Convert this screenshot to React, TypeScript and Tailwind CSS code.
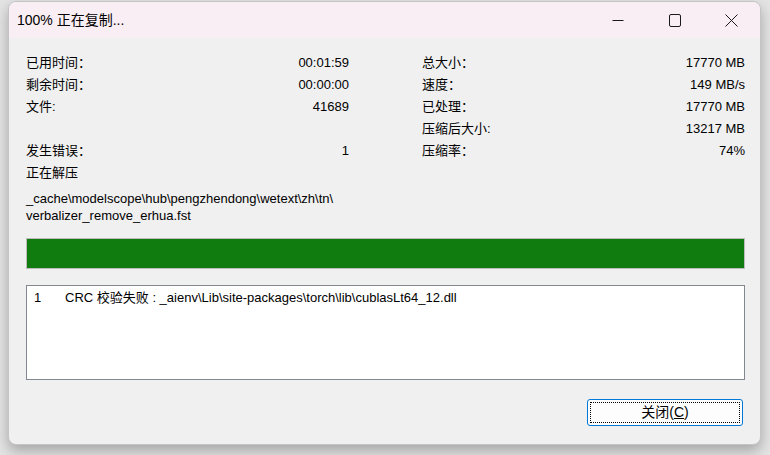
import React from 'react';

const font = { fontFamily: '"Liberation Sans", "Noto Sans CJK SC", sans-serif' };

type Row = { label: string; value?: string };

const leftRows: (Row | null)[] = [
  { label: '已用时间：', value: '00:01:59' },
  { label: '剩余时间：', value: '00:00:00' },
  { label: '文件:', value: '41689' },
  null,
  { label: '发生错误：', value: '1' },
  { label: '正在解压' },
];

const rightRows: (Row | null)[] = [
  { label: '总大小：', value: '17770 MB' },
  { label: '速度：', value: '149 MB/s' },
  { label: '已处理：', value: '17770 MB' },
  { label: '压缩后大小:', value: '13217 MB' },
  { label: '压缩率：', value: '74%' },
];

function StatColumn({ rows }: { rows: (Row | null)[] }) {
  return (
    <div className="flex flex-col">
      {rows.map((r, i) => (
        <div key={i} className="flex h-[22px] items-center justify-between">
          <span>{r?.label}</span>
          <span>{r?.value}</span>
        </div>
      ))}
    </div>
  );
}

function CaptionButtons() {
  return (
    <div className="flex h-full">
      <button className="flex h-full w-[57px] items-center justify-center">
        <svg width="12" height="12" viewBox="0 0 12 12">
          <path d="M0.5 6.5h11" stroke="#1a1a1a" strokeWidth="1" />
        </svg>
      </button>
      <button className="flex h-full w-[57px] items-center justify-center">
        <svg width="12" height="13" viewBox="0 0 12 13">
          <rect x="0.5" y="0.5" width="11" height="12" rx="1.5" fill="none" stroke="#1a1a1a" strokeWidth="1" />
        </svg>
      </button>
      <button className="flex h-full w-[57px] items-center justify-center">
        <svg width="13" height="13" viewBox="0 0 13 13">
          <path d="M0.5 0.5l12 12M12.5 0.5l-12 12" stroke="#1a1a1a" strokeWidth="1" />
        </svg>
      </button>
    </div>
  );
}

export default function App() {
  return (
    <div className="h-[455px] w-[770px] overflow-hidden bg-[#e4e4e4] pl-[8px] pt-[1px]" style={font}>
      <div className="flex h-[444px] w-[753px] flex-col overflow-hidden rounded-[8px] border border-[#c4c4c4] bg-[#f0f0f0] text-[13px] text-[#000] shadow-[0_6px_14px_rgba(0,0,0,0.28)]">
        {/* title bar */}
        <div className="flex h-[36px] shrink-0 items-center justify-between bg-[#f8eef3]">
          <span className="pl-[8px] text-[14px]">100% 正在复制...</span>
          <CaptionButtons />
        </div>

        <div className="flex flex-1 flex-col pl-[17px] pr-[15px] pt-[14px]">
          <div className="grid grid-cols-2 gap-x-[73px]">
            <StatColumn rows={leftRows} />
            <StatColumn rows={rightRows} />
          </div>

          <div className="mt-[6px] leading-[17px]">
            <div>_cache\modelscope\hub\pengzhendong\wetext\zh\tn\</div>
            <div>verbalizer_remove_erhua.fst</div>
          </div>

          {/* progress */}
          <div className="mt-[14px] h-[31px] border border-[#bcbcbc] bg-[#e6e6e6]">
            <div className="h-full bg-[#107c10]" style={{ width: '100%' }} />
          </div>

          {/* error log */}
          <div className="mt-[16px] h-[95px] border border-[#828790] bg-white px-[7px] pt-[2px]">
            <div className="flex h-[20px] items-center">
              <span className="w-[31px]">1</span>
              <span>CRC 校验失败 : _aienv\Lib\site-packages\torch\lib\cublasLt64_12.dll</span>
            </div>
          </div>

          <div className="mt-[19px] flex justify-end pr-[2px]">
            <button className="flex h-[27px] w-[156px] items-center justify-center rounded-[3px] border border-[#0078d7] bg-[#fdfdfd] p-[2px]">
              <span className="flex h-full w-full items-center justify-center border border-dotted border-black text-[14px]">
                关闭(<span className="underline">C</span>)
              </span>
            </button>
          </div>
        </div>
      </div>
    </div>
  );
}
